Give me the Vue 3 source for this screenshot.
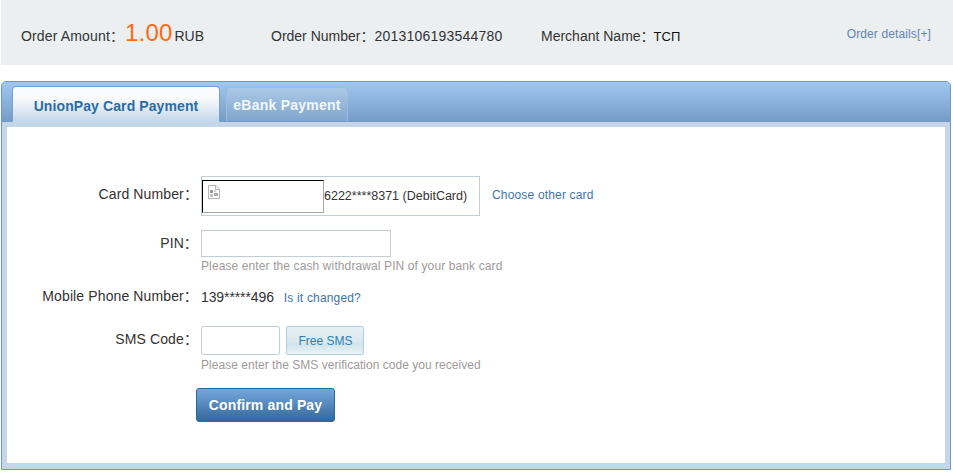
<script setup>
const orderInfo = {
  amount: '1.00',
  currency: 'RUB',
  number: '2013106193544780',
  merchant: 'ТСП'
}
</script>

<template>
  <div class="page">
    <div class="order-bar">
      <div class="order-item amount-item">
        <span>Order Amount：</span>
        <span class="amount">{{ orderInfo.amount }}</span>
        <span class="currency">{{ orderInfo.currency }}</span>
      </div>
      <div class="order-item number-item">Order Number：<span class="order-no">{{ orderInfo.number }}</span></div>
      <div class="order-item merchant-item">Merchant Name：<span class="merchant">{{ orderInfo.merchant }}</span></div>
      <a class="details-link">Order details[+]</a>
    </div>

    <div class="panel">
      <div class="tabs">
        <div class="tab active">UnionPay Card Payment</div>
        <div class="tab">eBank Payment</div>
      </div>
      <div class="panel-frame">
        <div class="form">
          <div class="row card-row">
            <label>Card Number：</label>
            <div class="card-box">
              <div class="broken-img">
                <svg width="12" height="14" viewBox="0 0 12 14">
                  <path d="M.5.5h7.5l3.5 3.5v9.5h-11z" fill="#fff" stroke="#b5b5b5" />
                  <path d="M7.5.5v4h4" fill="none" stroke="#b5b5b5" />
                  <rect x="2" y="5" width="3" height="3" fill="#9c9c9c" />
                  <rect x="6" y="8" width="4" height="3" fill="#a8a8a8" />
                  <rect x="2" y="9" width="3" height="3" fill="#c4c4c4" />
                  <rect x="6" y="5" width="2" height="2" fill="#d4d4d4" />
                </svg>
              </div>
              <span class="card-text">6222****8371 (DebitCard)</span>
            </div>
            <a class="link other-card">Choose other card</a>
          </div>

          <div class="row pin-row">
            <label>PIN：</label>
            <input class="pin-input" type="password" />
          </div>
          <div class="hint pin-hint">Please enter the cash withdrawal PIN of your bank card</div>

          <div class="row phone-row">
            <label>Mobile Phone Number：</label>
            <span class="phone">139*****496</span>
            <a class="link changed">Is it changed?</a>
          </div>

          <div class="row sms-row">
            <label>SMS Code：</label>
            <input class="sms-input" type="text" />
            <button class="sms-btn">Free SMS</button>
          </div>
          <div class="hint sms-hint">Please enter the SMS verification code you received</div>

          <button class="pay-btn">Confirm and Pay</button>
        </div>
      </div>
    </div>
  </div>
</template>

<style scoped>
.page {
  width: 953px;
  height: 472px;
  overflow: hidden;
  background: #fff;
  color: #333;
  font-family: "Liberation Sans", "Noto Sans CJK SC", sans-serif;
  font-size: 14px;
}

.order-bar {
  display: flex;
  align-items: center;
  height: 65px;
  margin-left: 1px;
  padding: 0 22px 0 20px;
  background: #ebeff0;
}

.order-item {
  line-height: 16px;
  white-space: nowrap;
}

.amount-item {
  display: flex;
  align-items: baseline;
  width: 250px;
  letter-spacing: 0.15px;
}

.amount {
  margin-left: 1px;
  margin-right: 2px;
  color: #ff6a13;
  font-size: 24px;
  line-height: 28px;
}

.currency {
  letter-spacing: 0;
}

.number-item {
  width: 270px;
  margin-top: 7px;
}

.merchant-item {
  margin-top: 7px;
}

.order-no {
  letter-spacing: 0.22px;
}

.merchant {
  margin-left: -1px;
  color: #111;
  font-size: 13px;
}

.details-link {
  margin-left: auto;
  margin-top: 3px;
  color: #5f86b5;
  font-size: 12px;
  letter-spacing: 0.12px;
}

.panel {
  width: 950px;
  height: 389px;
  margin-top: 16px;
  margin-left: 1px;
  border: 1px solid #6f98c8;
  border-radius: 5px 5px 0 0;
  box-sizing: border-box;
  background: #c4d6e8;
}

.tabs {
  display: flex;
  align-items: flex-end;
  gap: 6px;
  height: 40px;
  padding-left: 10px;
  border-radius: 4px 4px 0 0;
  background: linear-gradient(#a0c8ef, #739bc6);
}

.tab {
  display: flex;
  align-items: center;
  justify-content: center;
  width: 122px;
  height: 34px;
  margin-bottom: 1px;
  border: 1px solid #9dbbdb;
  border-bottom: none;
  border-radius: 4px 4px 0 0;
  box-sizing: border-box;
  background: linear-gradient(#abc9e7, #80a5cd);
  color: #f2f7fb;
  font-size: 14px;
  font-weight: bold;
  letter-spacing: 0.25px;
}

.tab.active {
  width: 208px;
  height: 36px;
  margin-bottom: 0;
  padding-top: 2px;
  border-color: #7ba1ca;
  background: linear-gradient(#fafbfd 30%, #c4d6e8);
  color: #2a6ca8;
  letter-spacing: 0.1px;
}

.panel-frame {
  height: 347px;
  padding: 5px 5px 6px 5px;
  box-sizing: border-box;
  background: #c4d6e8;
}

.form {
  height: 336px;
  padding: 49px 0 0 0;
  box-sizing: border-box;
  background: #fff;
}

.row {
  display: flex;
  align-items: center;
}

.row label {
  flex: none;
  width: 194px;
  padding-right: 3px;
  box-sizing: border-box;
  line-height: 16px;
  letter-spacing: 0.12px;
  text-align: right;
  white-space: nowrap;
}

.card-row label {
  padding-bottom: 4px;
}

.pin-row label {
  padding-bottom: 2px;
}

.phone-row label {
  padding-bottom: 4px;
}

.sms-row label {
  padding-bottom: 3px;
}

.card-box {
  display: flex;
  align-items: center;
  width: 279px;
  height: 40px;
  padding: 1px 0 0 0;
  border: 1px solid #c5cdd4;
  box-sizing: border-box;
}

.broken-img {
  display: flex;
  flex: none;
  width: 122px;
  height: 33px;
  padding: 4px 0 0 5px;
  border: 1px solid;
  border-color: #000 #a8a8a8 #a8a8a8 #000;
  box-sizing: border-box;
}

.card-text {
  margin-bottom: 2px;
  font-size: 12.5px;
  white-space: nowrap;
}

.link {
  color: #3f74ab;
  font-size: 12px;
  letter-spacing: 0.17px;
}

.other-card {
  margin-left: 12px;
  margin-bottom: 2px;
}

.pin-row {
  margin-top: 14px;
}

.pin-input {
  width: 190px;
  height: 27px;
  padding: 0;
  border: 1px solid #c5cdd4;
  box-sizing: border-box;
  background: #fff;
}

.hint {
  margin-top: 2px;
  margin-left: 194px;
  color: #a09a9a;
  font-size: 12px;
  line-height: 15px;
}

.pin-hint {
  letter-spacing: 0.11px;
}

.sms-hint {
  margin-top: 3px;
  letter-spacing: 0.03px;
}

.phone-row {
  margin-top: 15px;
  height: 18px;
}

.phone {
  margin-bottom: 2px;
  font-size: 14px;
  letter-spacing: -0.1px;
}

.changed {
  margin-left: 10px;
}

.sms-row {
  margin-top: 19px;
}

.sms-input {
  width: 79px;
  height: 29px;
  padding: 0;
  border: 1px solid #c5cdd4;
  border-radius: 2px;
  box-sizing: border-box;
  background: #fff;
}

.sms-btn {
  width: 78px;
  height: 29px;
  margin-left: 6px;
  padding: 0 0 0 1px;
  border: 1px solid #b0d0df;
  border-radius: 2px;
  box-sizing: border-box;
  background: linear-gradient(#e6f0f4 0%, #d9e8ee 60%, #cfe3ea 62%, #e9f3f6 100%);
  color: #2f7fb4;
  font-family: inherit;
  font-size: 12px;
}

.pay-btn {
  display: block;
  width: 139px;
  height: 34px;
  margin-top: 15px;
  margin-left: 189px;
  padding: 0;
  border: 1px solid #1f6c9f;
  border-radius: 3px;
  box-sizing: border-box;
  background: linear-gradient(#74a7dc, #34689a);
  color: #fff;
  font-family: inherit;
  font-size: 14px;
  font-weight: bold;
  letter-spacing: 0.15px;
}
</style>
